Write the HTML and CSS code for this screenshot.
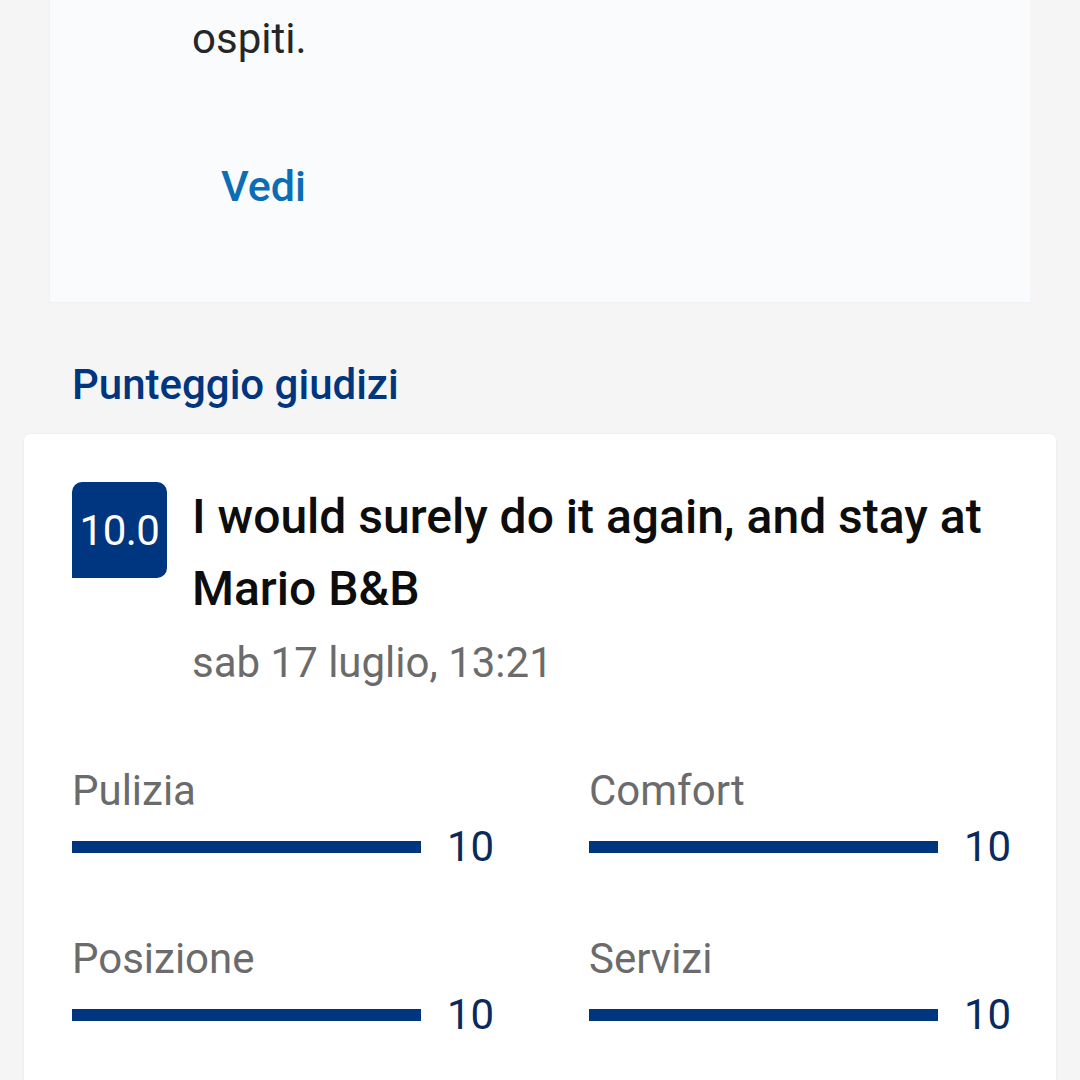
FILE: index.html
```html
<!DOCTYPE html>
<html lang="it">
<head>
<meta charset="utf-8">
<title>Punteggio giudizi</title>
<link rel="stylesheet" href="styles.css">
</head>
<body>
  <section class="info-card">
    <p class="info-text">ospiti.</p>
    <a class="info-link" href="#">Vedi</a>
  </section>

  <h2 class="section-title">Punteggio giudizi</h2>

  <section class="review-card">
    <div class="review-head">
      <div class="score-badge">10.0</div>
      <div class="review-main">
        <h3 class="review-title">I would surely do it again, and stay at Mario B&amp;B</h3>
        <p class="review-date">sab 17 luglio, 13:21</p>
      </div>
    </div>

    <div class="ratings">
      <div class="rating">
        <div class="rating-label">Pulizia</div>
        <div class="rating-row"><div class="bar"><div class="bar-fill" style="width:100%"></div></div><span class="rating-value">10</span></div>
      </div>
      <div class="rating">
        <div class="rating-label">Comfort</div>
        <div class="rating-row"><div class="bar"><div class="bar-fill" style="width:100%"></div></div><span class="rating-value">10</span></div>
      </div>
      <div class="rating">
        <div class="rating-label">Posizione</div>
        <div class="rating-row"><div class="bar"><div class="bar-fill" style="width:100%"></div></div><span class="rating-value">10</span></div>
      </div>
      <div class="rating">
        <div class="rating-label">Servizi</div>
        <div class="rating-row"><div class="bar"><div class="bar-fill" style="width:100%"></div></div><span class="rating-value">10</span></div>
      </div>
    </div>
  </section>
</body>
</html>
```

FILE: styles.css
```css
html, body {
  margin: 0;
  padding: 0;
  background: #f5f5f5;
  font-family: Roboto, "Noto Sans", "Liberation Sans", sans-serif;
  overflow: hidden;
  height: 1080px;
}

.info-card {
  margin: 0 50px 0 49px;
  width: 981px;
  box-sizing: border-box;
  background: #f9fbfd;
  border-left: 1px solid #eef2f7;
  border-bottom: 1px solid #eef1f5;
  padding: 11px 0 88px 142px;
  display: flex;
  flex-direction: column;
  align-items: flex-start;
}

.info-text {
  margin: 0;
  font-size: 42px;
  line-height: 56px;
  color: #262626;
}

.info-link {
  margin: 91px 0 0 29px;
  font-size: 43px;
  line-height: 56px;
  font-weight: 500;
  color: #0b6db3;
  text-decoration: none;
}

.section-title {
  margin: 58px 0 25px 72px;
  font-size: 42px;
  line-height: 48px;
  font-weight: 500;
  color: #003580;
}

.review-card {
  margin: 0 24px;
  background: #ffffff;
  border-radius: 6px;
  box-shadow: 0 0 2px rgba(0, 0, 0, 0.08);
  padding: 47px 48px 60px 48px;
}

.review-head {
  display: flex;
  align-items: flex-start;
  gap: 25px;
}

.score-badge {
  flex: none;
  width: 95px;
  height: 96px;
  margin-top: 1px;
  background: #003580;
  color: #ffffff;
  border-radius: 10px 10px 10px 0;
  display: flex;
  align-items: center;
  justify-content: center;
  font-size: 42px;
  letter-spacing: -0.5px;
}

.review-main {
  flex: 1;
  min-width: 0;
}

.review-title {
  margin: 0;
  font-size: 48px;
  line-height: 72px;
  font-weight: 500;
  color: #0d0d0d;
}

.review-date {
  margin: 10px 0 0 0;
  font-size: 42px;
  line-height: 56px;
  color: #6b6b6b;
}

.ratings {
  margin-top: 76px;
  display: grid;
  grid-template-columns: 1fr 1fr;
  column-gap: 98px;
  row-gap: 64px;
}

.rating-label {
  font-size: 42px;
  line-height: 48px;
  color: #6b6b6b;
}

.rating-row {
  margin-top: 8px;
  display: flex;
  align-items: center;
  gap: 26px;
  height: 48px;
}

.bar {
  flex: 1;
  height: 12px;
  background: #e6e6e6;
}

.bar-fill {
  height: 100%;
  background: #003580;
}

.rating-value {
  flex: none;
  width: 44px;
  font-size: 42px;
  line-height: 48px;
  color: #0b2a5c;
}
```
